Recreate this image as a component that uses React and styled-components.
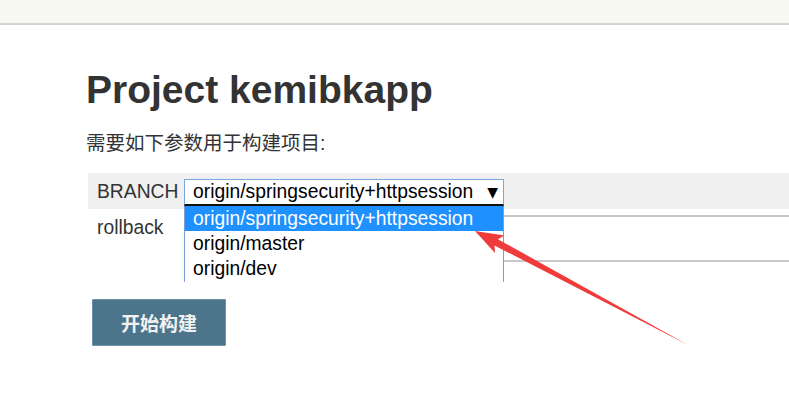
import React from 'react';
import styled, { createGlobalStyle } from 'styled-components';

const GlobalStyle = createGlobalStyle`
  html, body {
    margin: 0;
    padding: 0;
    background: #fff;
    overflow: hidden;
  }
  body {
    font-family: "Liberation Sans", Arial, "Noto Sans CJK SC", sans-serif;
    color: #333;
  }
`;

const Page = styled.div`
  position: relative;
  width: 789px;
  height: 404px;
  overflow: hidden;
`;

const Header = styled.div`
  height: 23px;
  background: #f7f9f1;
  border-bottom: 2px solid #d3d6cc;
`;

const Main = styled.div`
  padding: 42px 0 0 86px;
`;

const Title = styled.h1`
  margin: 0;
  font-size: 39px;
  font-weight: bold;
  line-height: 45px;
  color: #333;
`;

const Intro = styled.p`
  margin: 19px 0 0 0;
  font-family: "Liberation Sans", "Noto Sans CJK SC", sans-serif;
  font-size: 19.5px;
  line-height: 24px;
  color: #333;
`;

const ParamTable = styled.div`
  margin: 18px 0 0 2px;
  width: 720px;
`;

const Row = styled.div`
  display: flex;
  align-items: flex-start;
  height: ${(p) => p.$height}px;
  background: ${(p) => (p.$shaded ? '#f0f0f0' : 'transparent')};
`;

const Label = styled.div`
  width: 96px;
  box-sizing: border-box;
  padding: ${(p) => p.$offset || 0}px 0 0 9px;
  font-size: 19.3px;
  line-height: 22px;
  color: #333;
`;

const Value = styled.div`
  position: relative;
  flex: 1;
  padding-top: ${(p) => p.$offset || 0}px;
`;

const Select = styled.div`
  display: flex;
  align-items: center;
  justify-content: space-between;
  width: 320px;
  height: 27px;
  box-sizing: border-box;
  padding: 0 5px 0 8px;
  background: #fff;
  border: 1px solid #7aa5dd;
  border-bottom: 2px solid #111;
  font-size: 19.3px;
  color: #000;
`;

const Arrow = styled.span`
  font-family: "DejaVu Sans", sans-serif;
  font-size: 14px;
  color: #000;
`;

const Options = styled.ul`
  position: absolute;
  top: 33px;
  left: 0;
  width: 320px;
  height: 76px;
  box-sizing: border-box;
  margin: 0;
  padding: 0;
  list-style: none;
  background: #fff;
  border: 1px solid #7a9fd6;
  border-top: none;
  border-bottom: none;
  overflow: hidden;
  z-index: 2;
`;

const Option = styled.li`
  height: 25px;
  line-height: 25px;
  padding-left: 8px;
  font-size: 19.3px;
  color: ${(p) => (p.$active ? '#fff' : '#000')};
  background: ${(p) => (p.$active ? '#1e90ff' : 'transparent')};
`;

const TextInput = styled.div`
  height: 47px;
  box-sizing: border-box;
  border: 1px solid #c8c8c8;
  border-top-width: 2px;
  border-bottom-width: 2px;
  background: #fff;
`;

const BuildButton = styled.button`
  margin: 36px 0 0 6px;
  width: 134px;
  height: 47px;
  background: #4c758b;
  border: 1px solid #6b93aa;
  border-radius: 1px;
  color: #f2f2f2;
  font-family: "Liberation Sans", "Noto Sans CJK SC", sans-serif;
  font-weight: bold;
  font-size: 19px;
`;

const Overlay = styled.svg`
  position: absolute;
  left: 0;
  top: 0;
  pointer-events: none;
  z-index: 5;
`;

export default function App() {
  return (
    <Page>
      <GlobalStyle />
      <Header />
      <Main>
        <Title>Project kemibkapp</Title>
        <Intro>需要如下参数用于构建项目:</Intro>
        <ParamTable>
          <Row $shaded $height={36}>
            <Label $offset={8}>BRANCH</Label>
            <Value $offset={6}>
              <Select>
                <span>origin/springsecurity+httpsession</span>
                <Arrow>▼</Arrow>
              </Select>
              <Options>
                <Option $active>origin/springsecurity+httpsession</Option>
                <Option>origin/master</Option>
                <Option>origin/dev</Option>
              </Options>
            </Value>
          </Row>
          <Row $height={54}>
            <Label $offset={8}>rollback</Label>
            <Value $offset={6}>
              <TextInput />
            </Value>
          </Row>
        </ParamTable>
        <BuildButton>开始构建</BuildButton>
      </Main>
      <Overlay width="789" height="404" viewBox="0 0 789 404">
        <polygon
          points="475,231 504.4,235.4 497.9,239.2 688,345 494.5,245.4 495,253"
          fill="#f03b3b"
        />
      </Overlay>
    </Page>
  );
}
